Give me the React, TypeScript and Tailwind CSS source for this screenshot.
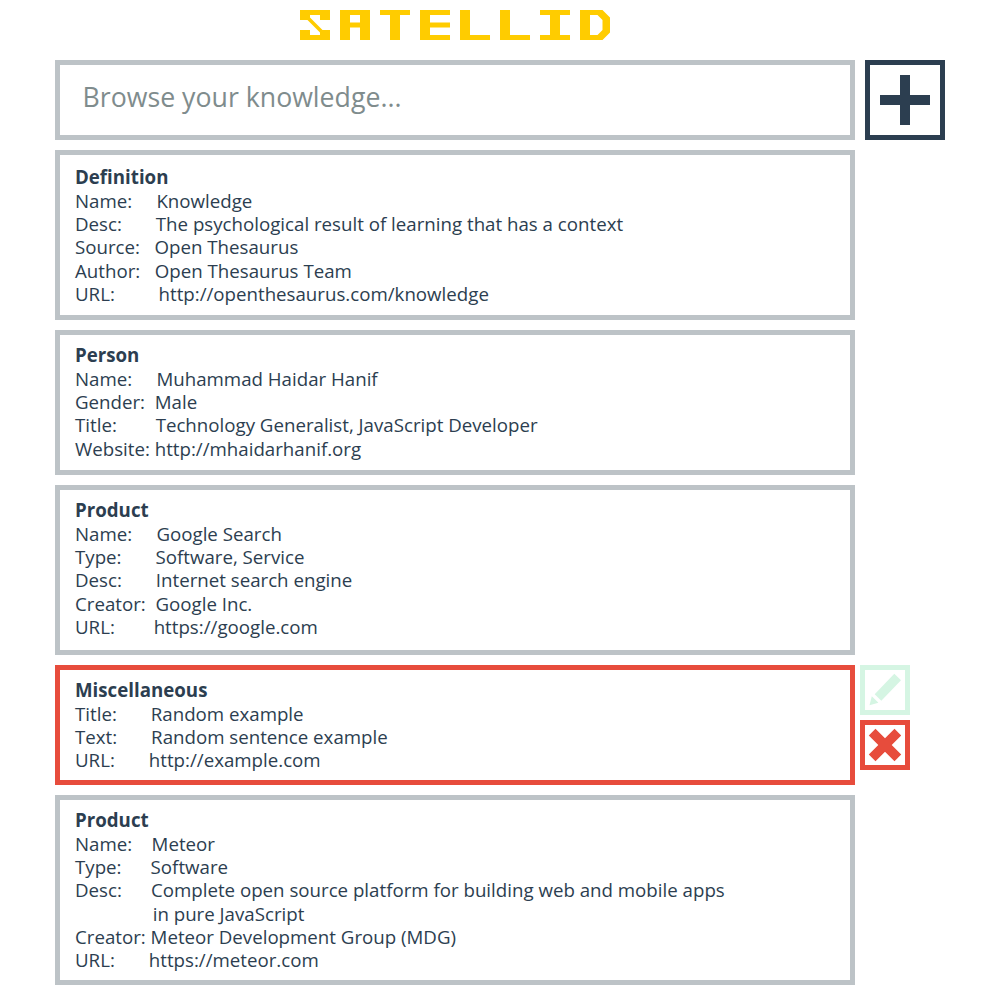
import type { ReactNode } from "react";

type Card = { title: string; lines: string[]; box: string; danger?: boolean };

const cards: Card[] = [
  {
    title: "Definition",
    box: "h-[170px] pt-[10.3px]",
    lines: [
      "Name:     Knowledge",
      "Desc:       The psychological result of learning that has a context",
      "Source:   Open Thesaurus",
      "Author:   Open Thesaurus Team",
      "URL:         http://openthesaurus.com/knowledge",
    ],
  },
  {
    title: "Person",
    box: "h-[145px] pt-[8.3px]",
    lines: [
      "Name:     Muhammad Haidar Hanif",
      "Gender:  Male",
      "Title:        Technology Generalist, JavaScript Developer",
      "Website: http://mhaidarhanif.org",
    ],
  },
  {
    title: "Product",
    box: "h-[170px] pt-[8.3px]",
    lines: [
      "Name:     Google Search",
      "Type:       Software, Service",
      "Desc:       Internet search engine",
      "Creator:  Google Inc.",
      "URL:        https://google.com",
    ],
  },
  {
    title: "Miscellaneous",
    box: "h-[120px] pt-[8.3px]",
    danger: true,
    lines: [
      "Title:       Random example",
      "Text:       Random sentence example",
      "URL:       http://example.com",
    ],
  },
  {
    title: "Product",
    box: "h-[190px] pt-[8.3px]",
    lines: [
      "Name:    Meteor",
      "Type:      Software",
      "Desc:      Complete open source platform for building web and mobile apps",
      "                in pure JavaScript",
      "Creator: Meteor Development Group (MDG)",
      "URL:       https://meteor.com",
    ],
  },
];

function Logo() {
  return (
    <svg role="img" aria-label="SATELLID" width="310" height="30" viewBox="0 0 310 30" fill="#ffcc00" className="ml-[245px] block">
      <path d="M0 0H30V10H20V5H10V7.5L22.5 20H30V30H0V20H10V25H20V22.5L7.5 10H0Z" />
      <path fillRule="evenodd" d="M40 0H70V30H60V17.5H50V30H40ZM50 5V12.5H60V5Z" />
      <path d="M80 0H110V5H100V30H90V5H80Z" />
      <path d="M120 0H150V5H130V12.5H150V17.5H130V25H150V30H120Z" />
      <path d="M160 0H170V25H190V30H160Z" />
      <path d="M200 0H210V25H230V30H200Z" />
      <path d="M240 0H270V5H260V25H270V30H240V25H250V5H240Z" />
      <path fillRule="evenodd" d="M280 0H302.5L310 7.5V22.5L302.5 30H280ZM290 5V25H297.5L302.5 20V10L297.5 5Z" />
    </svg>
  );
}

function IconButton({ label, className, children }: { label: string; className: string; children: ReactNode }) {
  return (
    <button aria-label={label} className={`block size-[50px] border-5 ${className}`}>
      <svg width="40" height="40" viewBox="0 0 40 40" fill="currentColor">
        {children}
      </svg>
    </button>
  );
}

export default function App() {
  return (
    <main className="h-[1000px] w-[1000px] bg-white pt-[10px] pl-[55px] font-['Open_Sans',sans-serif] text-[#2c3e50]">
      <Logo />
      <div className="mt-5 flex gap-[10px]">
        <div className="h-20 w-[800px] border-5 border-[#bdc3c7] pt-[12px] pl-[22.6px] text-[26.7px] leading-10 text-[#7f8c8d]">
          Browse your knowledge...
        </div>
        <button aria-label="Add" className="size-20 border-5 border-[#2c3e50]">
          <svg width="70" height="70" viewBox="0 0 70 70" fill="currentColor">
            <path d="M30 10H40V30H60V40H40V60H30V40H10V30H30Z" />
          </svg>
        </button>
      </div>
      <div className="mt-[10px] flex flex-col gap-[10px]">
        {cards.map((card, i) => (
          <div key={i} className="flex gap-[5px]">
            <section
              className={`w-[800px] border-5 pl-[15px] text-[18.69px] leading-[23.35px] whitespace-pre ${card.box} ${card.danger ? "border-[#e74c3c]" : "border-[#bdc3c7]"}`}
            >
              <h2 className="font-bold">{card.title}</h2>
              {card.lines.map((line) => (
                <p key={line}>{line}</p>
              ))}
            </section>
            {card.danger && (
              <div className="flex flex-col gap-[5px]">
                <IconButton label="Edit" className="border-[#d5f5e3] text-[#d5f5e3]">
                  <path d="M29.3 3.7L36 10.2L16.3 30.8L9.7 24.2ZM6.8 26.2L13.4 32.8L4.5 35.2Z" />
                </IconButton>
                <IconButton label="Delete" className="border-[#e74c3c] text-[#e74c3c]">
                  <path d="M10.5 3.8L20 13.2L29.5 3.8L36.2 10.5L26.7 20L36.2 29.5L29.5 36.2L20 26.8L10.5 36.2L3.8 29.5L13.3 20L3.8 10.5Z" />
                </IconButton>
              </div>
            )}
          </div>
        ))}
      </div>
    </main>
  );
}
